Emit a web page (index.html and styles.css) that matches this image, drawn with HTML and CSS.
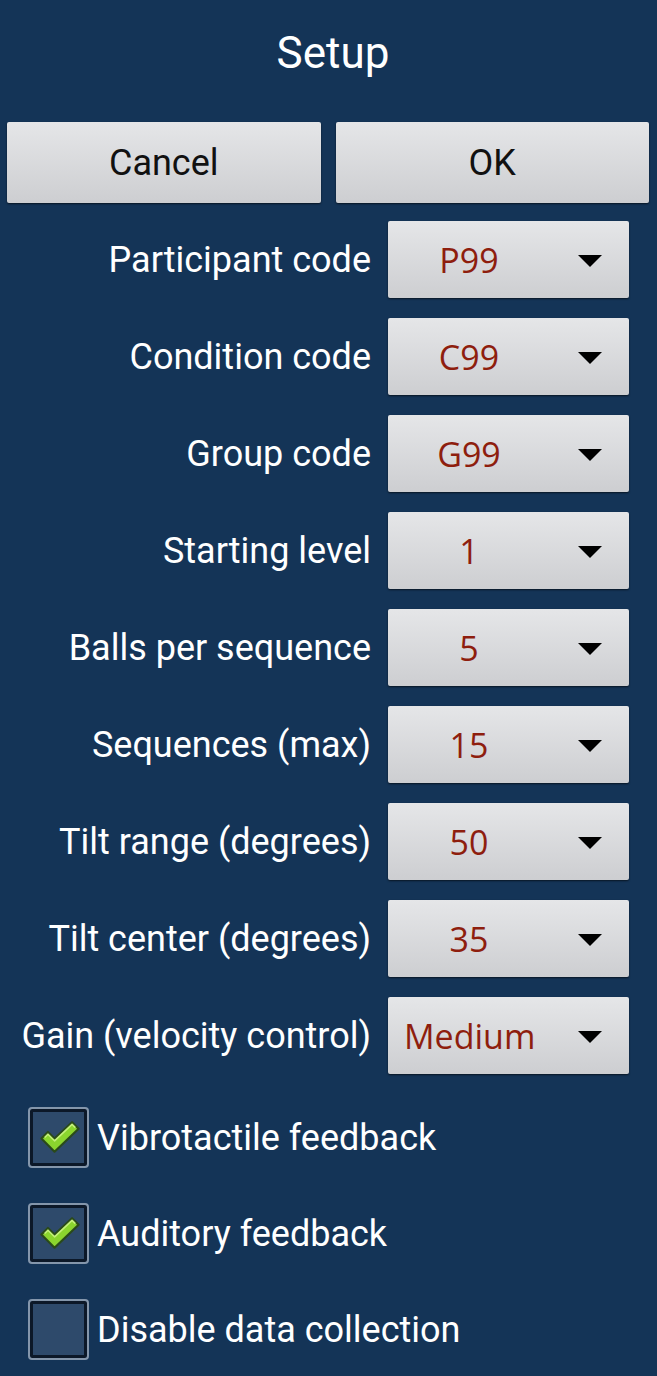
FILE: index.html
```html
<!DOCTYPE html>
<html>
<head>
<meta charset="utf-8">
<link rel="stylesheet" href="styles.css">
</head>
<body>
<div class="screen">
  <h1 class="title">Setup</h1>
  <div class="actions">
    <div class="btn">Cancel</div>
    <div class="btn">OK</div>
  </div>
  <div class="form">
    <div class="row"><div class="label">Participant code</div><div class="spinner"><span class="value">P99</span><span class="arrow"></span></div></div>
    <div class="row"><div class="label">Condition code</div><div class="spinner"><span class="value">C99</span><span class="arrow"></span></div></div>
    <div class="row"><div class="label">Group code</div><div class="spinner"><span class="value">G99</span><span class="arrow"></span></div></div>
    <div class="row"><div class="label">Starting level</div><div class="spinner"><span class="value">1</span><span class="arrow"></span></div></div>
    <div class="row"><div class="label">Balls per sequence</div><div class="spinner"><span class="value">5</span><span class="arrow"></span></div></div>
    <div class="row"><div class="label">Sequences (max)</div><div class="spinner"><span class="value">15</span><span class="arrow"></span></div></div>
    <div class="row"><div class="label">Tilt range (degrees)</div><div class="spinner"><span class="value">50</span><span class="arrow"></span></div></div>
    <div class="row"><div class="label">Tilt center (degrees)</div><div class="spinner"><span class="value">35</span><span class="arrow"></span></div></div>
    <div class="row"><div class="label">Gain (velocity control)</div><div class="spinner"><span class="value">Medium</span><span class="arrow"></span></div></div>
  </div>
  <div class="checks">
    <div class="check">
      <span class="box"><svg class="tick" viewBox="0 0 40 32" width="44" height="35"><path d="M3 17 L9 11 L15 17 L31 2 L37 8 L15 29 Z" fill="#8bd52e" stroke="#2a4a1a" stroke-width="2" stroke-linejoin="round"/><path d="M6 16 L9 13 L15 19 L31 4 L34 7" fill="none" stroke="#c4f07a" stroke-width="1.5" stroke-linejoin="round"/></svg></span>
      <span class="check-label">Vibrotactile feedback</span>
    </div>
    <div class="check">
      <span class="box"><svg class="tick" viewBox="0 0 40 32" width="44" height="35"><path d="M3 17 L9 11 L15 17 L31 2 L37 8 L15 29 Z" fill="#8bd52e" stroke="#2a4a1a" stroke-width="2" stroke-linejoin="round"/><path d="M6 16 L9 13 L15 19 L31 4 L34 7" fill="none" stroke="#c4f07a" stroke-width="1.5" stroke-linejoin="round"/></svg></span>
      <span class="check-label">Auditory feedback</span>
    </div>
    <div class="check">
      <span class="box"></span>
      <span class="check-label">Disable data collection</span>
    </div>
  </div>
</div>
</body>
</html>
```
FILE: styles.css
```css
html, body {
  margin: 0;
  padding: 0;
  background: #143457;
}
.screen {
  width: 657px;
  min-height: 1376px;
  background: #143457;
  font-family: Roboto, "Liberation Sans", sans-serif;
  color: #ffffff;
}
.title {
  margin: 0;
  padding: 28px 0 44px 9px;
  font-size: 44px;
  line-height: 50px;
  font-weight: 400;
  text-align: center;
}
.actions {
  display: flex;
  gap: 15px;
  padding: 0 8px 0 7px;
}
.btn {
  flex: 1;
  height: 81px;
  display: flex;
  align-items: center;
  justify-content: center;
  font-size: 36px;
  color: #111111;
  background: linear-gradient(#e5e6e8, #cdced1);
  border-radius: 2px;
  box-shadow: 0 1px 2px rgba(0, 0, 0, 0.6);
  box-sizing: border-box;
}
.form {
  display: flex;
  flex-direction: column;
  gap: 20px;
  padding: 18px 28px 0 0;
}
.row {
  display: grid;
  grid-template-columns: 1fr 241px;
  column-gap: 17px;
  height: 77px;
  align-items: center;
}
.label {
  text-align: right;
  font-size: 36px;
  white-space: nowrap;
}
.spinner {
  height: 77px;
  display: flex;
  align-items: center;
  padding-left: 16px;
  background: linear-gradient(#e5e6e8, #cdced1);
  border-radius: 2px;
  box-shadow: 0 1px 2px rgba(0, 0, 0, 0.6);
  box-sizing: border-box;
}
.value {
  width: 130px;
  text-align: center;
  font-family: "Open Sans", "DejaVu Sans", sans-serif;
  font-size: 34px;
  color: #8e1e0e;
}
.arrow {
  margin-left: auto;
  margin-right: 27px;
  width: 0;
  height: 0;
  border-left: 12px solid transparent;
  border-right: 12px solid transparent;
  border-top: 12px solid #000000;
  margin-top: 3px;
}
.checks {
  display: flex;
  flex-direction: column;
  gap: 35px;
  padding: 33px 0 0 28px;
}
.check {
  display: flex;
  align-items: center;
  gap: 8px;
  height: 61px;
}
.box {
  width: 61px;
  height: 61px;
  box-sizing: border-box;
  border: 2px solid #8496ab;
  border-radius: 4px;
  background: #2e4a6b;
  box-shadow: inset 0 0 0 3px #0c1828;
  display: flex;
  align-items: center;
  justify-content: center;
}
.tick {
  margin-left: 2px;
}
.check-label {
  font-size: 36px;
  white-space: nowrap;
}
```
